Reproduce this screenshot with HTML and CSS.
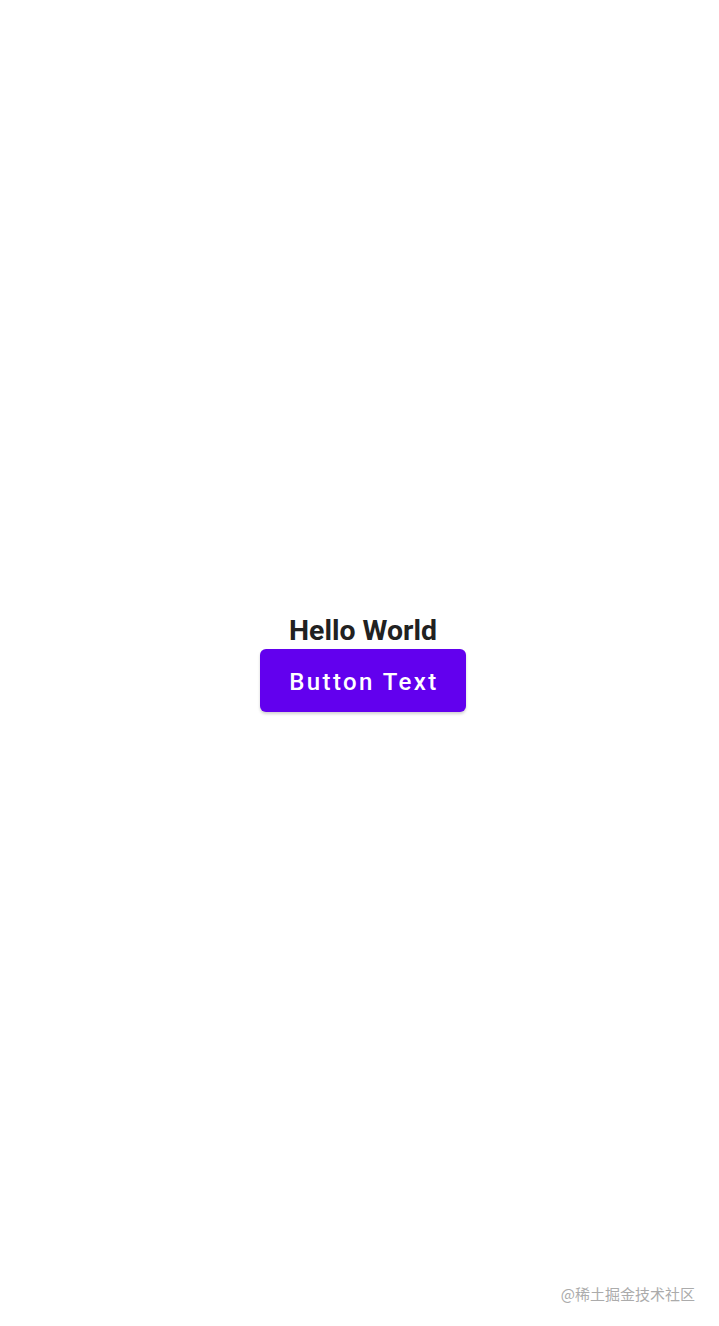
FILE: index.html
```html
<!DOCTYPE html>
<html lang="zh">
<head>
<meta charset="utf-8">
<link rel="stylesheet" href="styles.css">
</head>
<body>
<main class="screen">
  <div class="content">
    <h1 class="title">Hello World</h1>
    <button class="btn">Button Text</button>
  </div>
  <div class="watermark">@稀土掘金技术社区</div>
</main>
</body>
</html>
```
FILE: styles.css
```css
html, body {
  margin: 0;
  padding: 0;
  background: #fff;
}
.screen {
  width: 719px;
  height: 1326px;
  box-sizing: border-box;
  padding-left: 7px;
  position: relative;
  display: flex;
  flex-direction: column;
  align-items: center;
  font-family: Roboto, "Liberation Sans", sans-serif;
}
.content {
  display: flex;
  flex-direction: column;
  align-items: center;
  margin-top: 612px;
}
.title {
  margin: 0;
  font-size: 28.4px;
  font-weight: 700;
  line-height: 37px;
  color: #212121;
}
.btn {
  margin-top: 0;
  width: 206px;
  height: 63px;
  border: none;
  border-radius: 6px;
  background: #6200ee;
  color: #fff;
  font-family: Roboto, "Liberation Sans", sans-serif;
  font-size: 24px;
  font-weight: 500;
  letter-spacing: 2.4px;
  box-shadow: 0 2px 3px rgba(0,0,0,0.18);
  padding: 3px 0 0 2px;
}
.watermark {
  position: absolute;
  right: 24px;
  bottom: 22px;
  font-family: "Noto Sans CJK SC", sans-serif;
  font-size: 15px;
  color: #ababab;
}
```
